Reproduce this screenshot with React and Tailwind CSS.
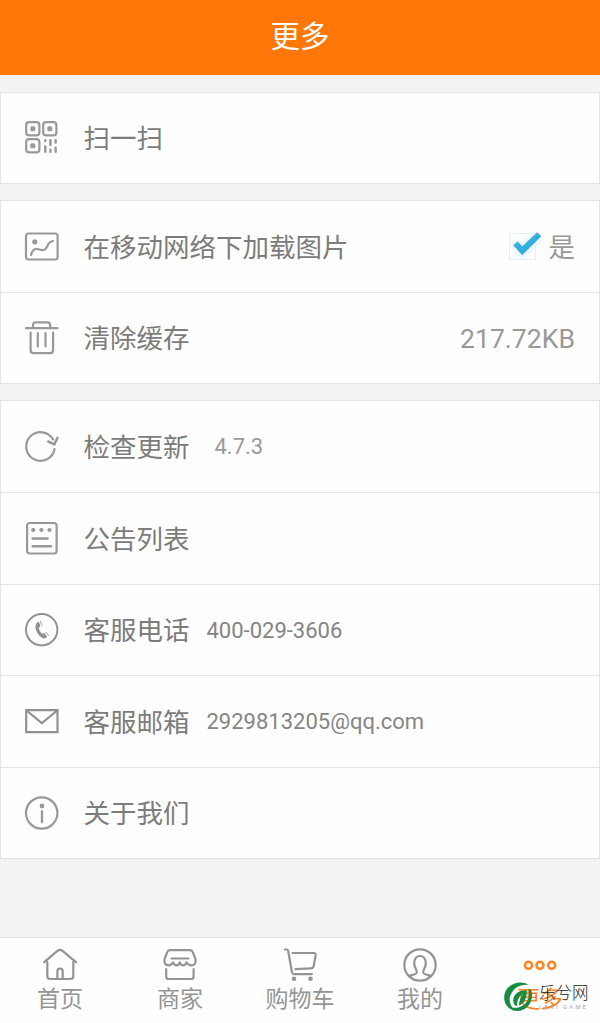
import React, { useState } from "react";
import clsx from "clsx";

const Icon = ({ children, className }) => (
  <svg
    viewBox="0 0 36 36"
    fill="none"
    stroke="currentColor"
    strokeWidth="2.2"
    strokeLinecap="round"
    strokeLinejoin="round"
    className={clsx("size-9 shrink-0", className)}
  >
    {children}
  </svg>
);

const ScanIcon = () => (
  <Icon>
    <rect x="2.2" y="2.2" width="13.2" height="13.2" rx="3" />
    <rect x="19.2" y="2.2" width="13.2" height="13.2" rx="3" />
    <rect x="2.2" y="19.2" width="13.2" height="13.2" rx="3" />
    <g fill="currentColor" stroke="none">
      <rect x="6.3" y="6.3" width="5" height="5" rx="1.5" />
      <rect x="23.3" y="6.3" width="5" height="5" rx="1.5" />
      <rect x="6.3" y="23.3" width="5" height="5" rx="1.5" />
    </g>
    <path
      d="M21.3 20.2v.8M21.3 26.400v5.400M26.400 20.200v4.800M26.400 29.700v2.100M31.600 20.200v2.300M31.600 27.700v4.100"
      strokeWidth="2.5"
    />
  </Icon>
);

const ImageIcon = () => (
  <Icon>
    <rect x="2" y="4.500" width="31.600" height="26" rx="2.500" />
    <circle cx="10.800" cy="12.800" r="2.600" fill="currentColor" stroke="none" />
    <path d="M7 26c1-3.500 3-6.300 6-6 2.500.3 5 1.800 7.300.8 3.800-1.600 2.700-8.300 8.700-8.600" />
  </Icon>
);

const TrashIcon = () => (
  <Icon>
    <path d="M2 8.200h31.500M9 8V5.500C9 3.500 9.800 2.300 11.500 2.300h12c1.800 0 2.700 1.200 2.700 3.200V8" />
    <path d="M6.600 12.500v17.500c0 2 1 3.200 3 3.200h16.500c2 0 3-1.200 3-3.200V12.500" />
    <path d="M13.800 13v13.500M21.500 13v13.500" />
  </Icon>
);

const RefreshIcon = () => (
  <Icon>
    <path d="M29 10.500A14.300 14.300 0 1 0 30.600 20" />
    <path d="M24.300 12.500l6 2.900 3.200-6.600" strokeWidth="2.500" />
  </Icon>
);

const NoticeIcon = () => (
  <Icon>
    <rect x="3.100" y="2" width="29.500" height="30.500" rx="2.500" />
    <g fill="currentColor" stroke="none">
      <circle cx="9.200" cy="9" r="2.100" />
      <circle cx="17.400" cy="9" r="2.100" />
      <circle cx="25.500" cy="9" r="2.100" />
    </g>
    <path d="M8.600 17.500h15M8.600 25.300h18.500" strokeWidth="2.400" />
  </Icon>
);

const PhoneIcon = () => (
  <Icon>
    <circle cx="17.700" cy="17.700" r="15.700" strokeWidth="2" />
    <path
      d="M14.700 9.500l1.800 4.700-1.700 1.600c.2 2.200 1.500 4.400 3.400 6l2-.8 3 3.600c-1 1.600-2.300 2.300-4 1.700-4.300-1.700-8-7.500-7.700-12 .2-2.300 1.300-4 3.200-4.800z"
      fill="currentColor"
      stroke="none"
    />
    <path d="M16.400 9.200l1.500 4M22 20.300l2.700 3.200" strokeWidth="0.900" />
  </Icon>
);

const MailIcon = () => (
  <Icon className="text-[#919191]">
    <path d="M2.200 6.200h31.300v22H2.200zM2.500 6.500l15.300 12.500L33.300 6.500" strokeLinejoin="miter" />
  </Icon>
);

const InfoIcon = () => (
  <Icon>
    <circle cx="17.700" cy="18" r="15.700" />
    <circle cx="18" cy="11" r="2.400" fill="currentColor" stroke="none" />
    <path d="M18 16.500v10.500" strokeWidth="2.400" />
  </Icon>
);

const HomeIcon = () => (
  <Icon>
    <path d="M2.200 15.200L15.500 3.800c1.700-1.400 3.300-1.400 5 0L34 15.200" />
    <path d="M5.300 15v14c0 2 .8 3 2.700 3h20.500c2 0 2.800-1 2.800-3V15" />
    <path d="M15.400 31.500v-7c0-4 5.300-4 5.300 0v7" />
  </Icon>
);

const ShopIcon = () => (
  <Icon>
    <path d="M8 3.200h20c1.500 0 2.300.7 2.900 2.200l2.500 6.400c1.200 3.700-.8 6.600-3.700 6.600-2.400 0-4.200-1.400-5.200-3.100-1.500 4-5.200 4-6.700 0-1.500 4-5.200 4-6.700 0-1 1.700-2.400 3.100-4.700 3.100-3.100 0-4.800-3.200-3.700-6.600L5.100 5.400C5.700 3.900 6.500 3.200 8 3.200z" />
    <path d="M9.500 11.500h17M4.200 22.200v7c0 2 .7 2.800 2.500 2.800H29c1.900 0 2.600-.8 2.600-2.800v-7" />
  </Icon>
);

const CartIcon = () => (
  <Icon>
    <path d="M3 2.500h1.500c1 0 1.400.5 1.700 1.500L10 25.500c.3 1.200.8 1.600 2 1.600h18" />
    <path d="M10.500 6h21c1.800 0 2.400.8 2.100 2.500l-1.900 10.500c-.3 1.500-1.200 2.200-2.700 2.300l-15.500.9" />
    <g fill="currentColor" stroke="none">
      <circle cx="12" cy="31.800" r="2.300" />
      <circle cx="28.500" cy="31.800" r="2.300" />
    </g>
  </Icon>
);

const UserIcon = () => (
  <Icon>
    <circle cx="18" cy="18" r="15.700" />
    <path d="M7.500 29c2.500-1.300 6-1.200 7.200-3 1.300-2.300-3-5.500-2.500-10 .3-4.700 2.600-7 5.800-7s5.500 2.300 5.800 7c.5 4.500-3.800 7.700-2.500 10 1.200 1.800 4.700 1.700 7.200 3" />
  </Icon>
);

const MoreIcon = () => (
  <Icon>
    <g strokeWidth="2.600">
      <circle cx="6.500" cy="18.300" r="3.500" />
      <circle cx="18" cy="18.300" r="3.500" />
      <circle cx="29.700" cy="18.300" r="3.500" />
    </g>
  </Icon>
);

const CheckMark = ({ checked }) => (
  <svg viewBox="0 0 42 42" className="size-[42px]">
    <rect x="7.500" y="7.500" width="26" height="26" fill="#fcfefe" stroke="#e8eef0" />
    {checked && (
      <>
        <path
          d="M13 19l4-1 3 4 14-13 3 4-17 16z"
          fill="#d4f2fc"
          stroke="#d4f2fc"
          strokeWidth="5"
          className="blur-[2px]"
        />
        <path
          d="M11.700 19.200l3.900-3.200 4.700 4.700L35.200 6.700l3.600 3.600-18.600 18.400z"
          fill="#2fb0e4"
          stroke="#6a9fb8"
          strokeWidth="0.800"
          strokeLinejoin="round"
        />
      </>
    )}
  </svg>
);

const Card = ({ children }) => (
  <section className="flex flex-col border-x border-b border-[#e4e4e4] bg-[#fefefe]">
    {children}
  </section>
);

const Row = ({ icon, label, note, noteClass, className, children }) => (
  <div
    className={clsx(
      "flex items-center border-t border-[#e4e4e4] pl-[23px] pr-6",
      className
    )}
  >
    {icon}
    <span className="ml-[23.5px] pt-0.5 text-[26.5px] leading-9 text-[#7c7c7c]">
      {label}
    </span>
    {note && (
      <span className={clsx("pt-px text-[22px] leading-7", noteClass)}>
        {note}
      </span>
    )}
    {children}
  </div>
);

const tabs = [
  { label: "首页", icon: <HomeIcon /> },
  { label: "商家", icon: <ShopIcon /> },
  { label: "购物车", icon: <CartIcon /> },
  { label: "我的", icon: <UserIcon /> },
  { label: "更多", icon: <MoreIcon /> },
];

const Watermark = () => (
  <div className="pointer-events-none absolute bottom-[11px] left-[503px] flex items-center">
    <svg viewBox="0 0 32 32" className="size-[31px]" fill="#168c42">
      <path d="M27 4C17-2 4 3 1.500 14c-1.600 8 3.500 15.500 11.500 17C6.500 26 5 18 9 12 12.500 6 19 3 27 4z" />
      <path d="M29 9c3 8-1 18-9 21-5 2-10 .5-12.500-3C15 29 23 26 25.800 19c1.500-4 1.500-8 .5-11z" />
      <path d="M24.500 9.500c-8-.5-14 4.500-14 10.500 0 3 1.500 5 4 6 0-6 2-10 6-12.500-2.500 3.500-4 7.500-4 12C22 23.500 25 17 24.500 9.500z" />
    </svg>
    <div className="ml-[5px] flex flex-col">
      <span className="text-[16.500px] font-light leading-[20px] text-[#222]">
        乐兮网
      </span>
      <span className="-mt-px text-[6px] leading-[7px] tracking-[2.100px] text-[#aaa]">
        LEXI GAME
      </span>
    </div>
  </div>
);

const App = () => {
  const [active, setActive] = useState("更多");
  const [loadImages, setLoadImages] = useState(true);

  return (
    <div className="flex h-[1023px] w-[600px] flex-col bg-[#f3f3f3] font-[Roboto,'Noto_Sans_CJK_SC',sans-serif]">
      <header className="flex h-[75px] items-center justify-center bg-[#ff7708] pb-0.5 text-[29.500px] text-white">
        <h1 className="leading-10">更多</h1>
      </header>

      <main className="flex flex-1 flex-col gap-4 pt-[17px]">
        <Card>
          <Row icon={<ScanIcon />} label="扫一扫" className="h-[91px] text-[#999]" />
        </Card>

        <Card>
          <Row
            icon={<ImageIcon />}
            label="在移动网络下加载图片"
            className="h-[92px] text-[#999]"
          >
            <button
              onClick={() => setLoadImages(!loadImages)}
              className="ml-auto flex items-center gap-[5px] text-[26.400px] leading-9 text-[#999]"
            >
              <CheckMark checked={loadImages} />
              <span className="pt-0.5">是</span>
            </button>
          </Row>
          <Row
            icon={<TrashIcon />}
            label="清除缓存"
            note="217.72KB"
            noteClass="ml-auto text-[26.600px]! text-[#999]"
            className="h-[91px] text-[#999]"
          />
        </Card>

        <Card>
          <Row
            icon={<RefreshIcon />}
            label="检查更新"
            note="4.7.3"
            noteClass="ml-[25px] text-[#999]"
            className="h-[92px] text-[#999]"
          />
          <Row icon={<NoticeIcon />} label="公告列表" className="h-[92px] text-[#999]" />
          <Row
            icon={<PhoneIcon />}
            label="客服电话"
            note="400-029-3606"
            noteClass="ml-[17px] text-[#858585]"
            className="h-[91px] text-[#919191]"
          />
          <Row
            icon={<MailIcon />}
            label="客服邮箱"
            note="2929813205@qq.com"
            noteClass="ml-[17px] text-[#858585]"
            className="h-[92px]"
          />
          <Row icon={<InfoIcon />} label="关于我们" className="h-[91px] text-[#999]" />
        </Card>
      </main>

      <nav className="relative grid h-[86px] grid-cols-5 border-t border-[#e2e2e2] bg-[#fefefe]">
        {tabs.map((tab) => (
          <button
            key={tab.label}
            onClick={() => setActive(tab.label)}
            className={clsx(
              "flex flex-col items-center pt-[9px]",
              active === tab.label ? "text-[#ff8322]" : "text-[#949494]"
            )}
          >
            {tab.icon}
            <span className="mt-0.5 text-[23px] leading-[30px]">{tab.label}</span>
          </button>
        ))}
        <Watermark />
      </nav>
    </div>
  );
};

export default App;
